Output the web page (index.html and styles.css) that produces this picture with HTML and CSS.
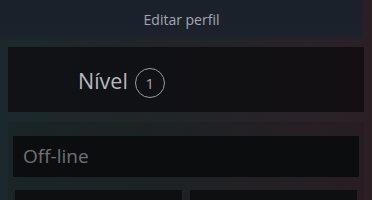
FILE: index.html
```html
<!DOCTYPE html>
<html lang="pt-BR">
<head>
<meta charset="utf-8">
<title>Editar perfil</title>
<link rel="stylesheet" href="styles.css">
</head>
<body>
<div class="page">
  <header class="topbar">Editar perfil</header>
  <section class="level-card">
    <span class="level-label">Nível</span>
    <span class="level-badge">1</span>
  </section>
  <section class="status-wrap">
    <div class="status-field">Off-line</div>
    <div class="tiles">
      <div class="tile"></div>
      <div class="tile"></div>
    </div>
  </section>
</div>
</body>
</html>
```
FILE: styles.css
```css
html, body {
  margin: 0;
  padding: 0;
}
body {
  background: linear-gradient(90deg, #1c292c 0%, #202528 45%, #2a2228 85%, #2c1f24 100%);
  font-family: "Open Sans", "Noto Sans", sans-serif;
  overflow: hidden;
  height: 200px;
}
.page {
  display: flex;
  flex-direction: column;
  height: 200px;
  overflow: hidden;
}
.topbar {
  flex-shrink: 0;
  height: 40px;
  margin-right: 9px;
  background: linear-gradient(180deg, #1b212b 0%, #1b222c 85%, rgba(27, 33, 43, 0.4) 100%);
  color: #a3a8af;
  font-size: 14px;
  display: flex;
  align-items: center;
  justify-content: center;
  padding-bottom: 2px;
  box-sizing: border-box;
}
.level-card {
  flex-shrink: 0;
  margin: 7px 8px 0 8px;
  height: 65px;
  background: linear-gradient(90deg, #101215 0%, #111114 60%, #130f12 100%);
  display: flex;
  align-items: center;
  padding-left: 70px;
  box-sizing: border-box;
  gap: 7px;
}
.level-label {
  color: #b6babf;
  font-size: 21.5px;
  line-height: 1;
  margin-top: 3px;
}
.level-badge {
  width: 28px;
  height: 28px;
  border: 1.5px solid #9a9c9f;
  border-radius: 50%;
  color: #a8abaf;
  font-size: 15px;
  display: flex;
  align-items: center;
  justify-content: center;
  margin-top: 6px;
}
.status-wrap {
  flex: 1 1 auto;
  min-height: 0;
  overflow: hidden;
  margin: 10px 8px 0 8px;
  padding: 14px 5px 0 5px;
  background: rgba(0, 0, 0, 0.08);
  display: flex;
  flex-direction: column;
  gap: 13px;
}
.status-field {
  height: 41px;
  flex-shrink: 0;
  background: #0c0d0f;
  color: #6e7277;
  font-size: 19px;
  display: flex;
  align-items: center;
  padding-left: 10px;
  padding-bottom: 2px;
  box-sizing: border-box;
}
.tiles {
  display: grid;
  grid-template-columns: 1fr 1fr;
  gap: 8px;
  padding: 0 2px;
  flex-shrink: 0;
}
.tile {
  height: 30px;
  background: #0e0f11;
}
```
